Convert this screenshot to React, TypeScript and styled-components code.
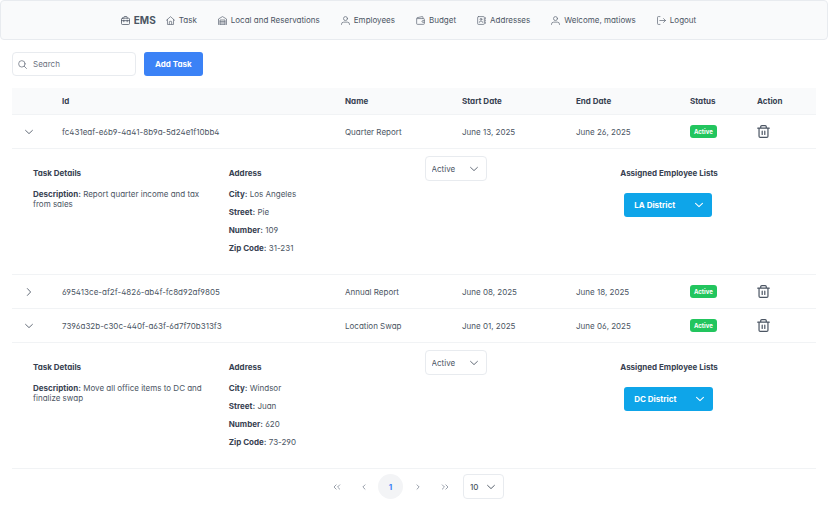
import React from "react";
import styled, { createGlobalStyle } from "styled-components";

const color = {
  text: "#4b5563",
  strong: "#374151",
  muted: "#6b7280",
  line: "#f1f3f5",
  border: "#e8ebef",
  surface: "#f9fafb",
  primary: "#3b82f6",
  info: "#0ea5e9",
  success: "#22c55e",
};

const GlobalStyle = createGlobalStyle`
  *, *::before, *::after { box-sizing: border-box; }
  body {
    margin: 0;
    background: #ffffff;
    color: ${color.text};
    font-family: Inter, "Liberation Sans", sans-serif;
    font-feature-settings: "cv02", "cv03", "cv04", "cv11";
    font-size: 8px;
    line-height: 12px;
  }
  button, input, select {
    font: inherit;
    font-feature-settings: inherit;
    color: inherit;
    margin: 0;
  }
  button { cursor: pointer; }
`;

/* ---------- icons ---------- */

const Svg = styled.svg<{ $size: number; $weight?: number }>`
  display: block;
  flex: none;
  width: ${(p) => p.$size}px;
  height: ${(p) => p.$size}px;
  fill: none;
  stroke: currentColor;
  stroke-width: ${(p) => p.$weight ?? 1.2};
  stroke-linecap: round;
  stroke-linejoin: round;
`;

const shapes = {
  briefcase: (
    <>
      <rect x="0.8" y="3.4" width="12.4" height="9.8" rx="1.4" />
      <path d="M4.4 3.4V2A1.2 1.2 0 0 1 5.6 0.8H8.4A1.2 1.2 0 0 1 9.6 2V3.4M0.8 7.2H13.2M4.4 6.4V9M9.6 6.4V9" />
    </>
  ),
  home: (
    <path d="M0.7 6.6L7 1L13.3 6.6M2.3 5.4V13.2H11.7V5.4M5.2 13V9.2A1 1 0 0 1 6.2 8.2H7.8A1 1 0 0 1 8.8 9.2V13" />
  ),
  warehouse: (
    <path d="M0.8 13.2V4.6L7 0.9L13.2 4.6V13.2M3.2 13.2V6.2H10.8V13.2M3.2 8.5H10.8M3.2 10.8H10.8M3.2 13.1H10.8" />
  ),
  user: (
    <>
      <circle cx="7" cy="4" r="3.1" />
      <path d="M0.8 13.2V12.6A3.2 3.2 0 0 1 4 9.6H10A3.2 3.2 0 0 1 13.2 12.6V13.2" />
    </>
  ),
  wallet: (
    <path d="M1 4.2V11.8A1.2 1.2 0 0 0 2.2 13H11.8A1.2 1.2 0 0 0 13 11.8V5.2A1.2 1.2 0 0 0 11.8 4H1.8A0.7 0.7 0 0 1 1.6 2.7L9.6 0.9A1 1 0 0 1 10.8 1.8V4M13 7.2H10.6A1.2 1.2 0 0 0 10.6 9.8H13" />
  ),
  addressBook: (
    <>
      <rect x="1" y="0.9" width="10.4" height="12.2" rx="1.2" />
      <circle cx="6.2" cy="5.1" r="1.4" />
      <path d="M3.6 9.8A2.6 2 0 0 1 8.8 9.8M13 2.6V4.2M13 6.2V7.8M13 9.8V11.4" />
    </>
  ),
  signOut: (
    <path d="M4.6 13.1H2A1.2 1.2 0 0 1 0.8 11.9V2.1A1.2 1.2 0 0 1 2 0.9H4.6M4.4 7H13.2M10.2 4L13.2 7L10.2 10" />
  ),
  search: (
    <>
      <circle cx="6" cy="6" r="5" />
      <path d="M9.7 9.7L13.2 13.2" />
    </>
  ),
  trash: (
    <path d="M0.8 3.4H13.2M2.2 3.4V12A1.3 1.3 0 0 0 3.5 13.3H10.5A1.3 1.3 0 0 0 11.8 12V3.4M4 3.4V1.9A1.2 1.2 0 0 1 5.2 0.7H8.8A1.2 1.2 0 0 1 10 1.9V3.4M5.6 6.6V10.2M8.4 6.6V10.2" />
  ),
  chevronDown: <path d="M1 4.2L7 9.8L13 4.2" />,
  chevronRight: <path d="M4.2 1L9.8 7L4.2 13" />,
  angleLeft: <path d="M8.4 4L5.4 7L8.4 10" />,
  angleRight: <path d="M5.6 4L8.6 7L5.6 10" />,
  anglesLeft: <path d="M5.8 4L2.8 7L5.8 10M10.8 4L7.8 7L10.8 10" />,
  anglesRight: <path d="M3.2 4L6.2 7L3.2 10M8.2 4L11.2 7L8.2 10" />,
};

type IconName = keyof typeof shapes;

function Icon({ name, size = 9, weight }: { name: IconName; size?: number; weight?: number }) {
  return (
    <Svg viewBox="0 0 14 14" $size={size} $weight={weight} aria-hidden="true">
      {shapes[name]}
    </Svg>
  );
}

/* ---------- navigation ---------- */

const NavBar = styled.nav`
  display: flex;
  justify-content: center;
  align-items: center;
  height: 40px;
  background: ${color.surface};
  border: 1px solid ${color.border};
  border-radius: 4px;
`;

const Brand = styled.a`
  display: flex;
  align-items: center;
  gap: 4px;
  font-size: 10px;
  font-weight: 700;
  color: ${color.text};
  text-decoration: none;
`;

const NavLink = styled.a`
  display: flex;
  align-items: center;
  gap: 4px;
  padding: 0 11px 0 10px;
  color: ${color.text};
  text-decoration: none;
  white-space: nowrap;
  & > svg {
    color: ${color.muted};
  }
`;

const navItems: { icon: IconName; label: string }[] = [
  { icon: "home", label: "Task" },
  { icon: "warehouse", label: "Local and Reservations" },
  { icon: "user", label: "Employees" },
  { icon: "wallet", label: "Budget" },
  { icon: "addressBook", label: "Addresses" },
  { icon: "user", label: "Welcome, matiows" },
  { icon: "signOut", label: "Logout" },
];

/* ---------- toolbar ---------- */

const Main = styled.main`
  padding: 12px;
`;

const Toolbar = styled.div`
  display: flex;
  gap: 8px;
  margin-bottom: 12px;
`;

const SearchField = styled.label`
  display: flex;
  align-items: center;
  gap: 6px;
  width: 124px;
  height: 24px;
  padding: 0 5px;
  border: 1px solid ${color.border};
  border-radius: 4px;
  color: ${color.muted};
`;

const SearchInput = styled.input`
  flex: 1;
  min-width: 0;
  padding: 0;
  border: 0;
  outline: 0;
  background: transparent;
  &::placeholder {
    color: ${color.muted};
    opacity: 1;
  }
`;

const SolidButton = styled.button<{ $tone: "primary" | "info" }>`
  display: inline-flex;
  align-items: center;
  gap: 20px;
  height: 24px;
  padding: 0 ${(p) => (p.$tone === "info" ? "9px 0 10px" : "11px")};
  border: 0;
  border-radius: 3px;
  background: ${(p) => color[p.$tone]};
  color: #ffffff;
  font-weight: 700;
`;

/* ---------- table ---------- */

const Table = styled.table`
  width: 100%;
  table-layout: fixed;
  border-collapse: separate;
  border-spacing: 0;
`;

const Col = styled.col<{ $width?: number }>`
  width: ${(p) => (p.$width ? `${p.$width}px` : "auto")};
`;

const HeadCell = styled.th`
  height: 27px;
  padding: 0 9px;
  background: ${color.surface};
  border-bottom: 1px solid ${color.line};
  color: ${color.strong};
  font-weight: 700;
  text-align: left;
`;

const Cell = styled.td`
  height: 34px;
  padding: 0 9px;
  border-bottom: 1px solid ${color.line};
`;

const IconButton = styled.button`
  display: flex;
  padding: 0;
  border: 0;
  background: transparent;
  color: ${color.text};
`;

const Toggle = styled(IconButton)`
  padding: 4px;
`;

const Tag = styled.span`
  display: inline-block;
  padding: 0 4px;
  border-radius: 3px;
  background: ${color.success};
  color: #ffffff;
  font-size: 6px;
  font-weight: 700;
  line-height: 13px;
  vertical-align: middle;
`;

const DetailCell = styled.td`
  height: 126px;
  padding: 0 0 0 21px;
  border-bottom: 1px solid ${color.line};
  vertical-align: top;
`;

const DetailGrid = styled.div`
  display: grid;
  grid-template-columns: repeat(4, minmax(0, 1fr));
`;

const DetailColumn = styled.section<{ $raised?: boolean }>`
  padding: ${(p) => (p.$raised ? 7 : 18)}px 16px 0 0;
`;

const DetailTitle = styled.h2`
  margin: 0 0 10px;
  color: ${color.strong};
  font-size: 8px;
  font-weight: 700;
`;

const Line = styled.p`
  margin: 0 0 8px;
  line-height: 10px;
`;

const Label = styled.strong`
  color: ${color.strong};
  font-weight: 700;
`;

const ListHolder = styled.div`
  padding: 4px 0 0 4px;
`;

const SelectBox = styled.span<{ $width: number }>`
  display: inline-grid;
  align-items: center;
  width: ${(p) => p.$width}px;
  height: 25px;
  vertical-align: top;
  & > * {
    grid-area: 1 / 1;
  }
  & > svg {
    justify-self: end;
    margin-right: 9px;
    pointer-events: none;
  }
`;

const NativeSelect = styled.select`
  width: 100%;
  height: 100%;
  padding: 0 6px;
  appearance: none;
  border: 1px solid ${color.border};
  border-radius: 4px;
  background: #ffffff;
`;

/* ---------- paginator ---------- */

const Paginator = styled.nav`
  display: flex;
  justify-content: center;
  align-items: center;
  gap: 2px;
  padding-top: 5px;
`;

const PageButton = styled.button<{ $current?: boolean }>`
  display: flex;
  align-items: center;
  justify-content: center;
  width: 25px;
  height: 25px;
  padding: 0;
  border: 0;
  border-radius: 50%;
  background: ${(p) => (p.$current ? "#f3f4f6" : "transparent")};
  color: ${(p) => (p.$current ? color.primary : "#9aa1ac")};
  font-weight: ${(p) => (p.$current ? 700 : 400)};
`;

const PageSize = styled.div`
  padding-left: 4px;
  font-weight: 500;
`;

/* ---------- data ---------- */

type Task = {
  id: string;
  name: string;
  start: string;
  end: string;
  open: boolean;
  description: string;
  address: [string, string][];
  list: string;
};

const tasks: Task[] = [
  {
    id: "fc431eaf-e6b9-4a41-8b9a-5d24e1f10bb4",
    name: "Quarter Report",
    start: "June 13, 2025",
    end: "June 26, 2025",
    open: true,
    description: "Report quarter income and tax from sales",
    address: [["City", "Los Angeles"], ["Street", "Pie"], ["Number", "109"], ["Zip Code", "31-231"]],
    list: "LA District",
  },
  {
    id: "695413ce-af2f-4826-ab4f-fc8d92af9805",
    name: "Annual Report",
    start: "June 08, 2025",
    end: "June 18, 2025",
    open: false,
    description: "",
    address: [],
    list: "",
  },
  {
    id: "7396a32b-c30c-440f-a63f-6d7f70b313f3",
    name: "Location Swap",
    start: "June 01, 2025",
    end: "June 06, 2025",
    open: true,
    description: "Move all office items to DC and finalize swap",
    address: [["City", "Windsor"], ["Street", "Juan"], ["Number", "620"], ["Zip Code", "73-290"]],
    list: "DC District",
  },
];

function TaskDetails({ task }: { task: Task }) {
  return (
    <tr>
      <DetailCell colSpan={7}>
        <DetailGrid>
          <DetailColumn>
            <DetailTitle>Task Details</DetailTitle>
            <Line>
              <Label>Description:</Label> {task.description}
            </Line>
          </DetailColumn>
          <DetailColumn>
            <DetailTitle>Address</DetailTitle>
            {task.address.map(([label, value]) => (
              <Line key={label}>
                <Label>{label}:</Label> {value}
              </Line>
            ))}
          </DetailColumn>
          <DetailColumn $raised>
            <SelectBox $width={62}>
              <NativeSelect aria-label={`Status of ${task.name}`} defaultValue="Active">
                <option>Active</option>
              </NativeSelect>
              <Icon name="chevronDown" size={8} weight={1.5} />
            </SelectBox>
          </DetailColumn>
          <DetailColumn>
            <DetailTitle>Assigned Employee Lists</DetailTitle>
            <ListHolder>
              <SolidButton type="button" $tone="info" aria-haspopup="true">
                {task.list}
                <Icon name="chevronDown" size={8} weight={1.8} />
              </SolidButton>
            </ListHolder>
          </DetailColumn>
        </DetailGrid>
      </DetailCell>
    </tr>
  );
}

function TaskRows({ task }: { task: Task }) {
  const [open, setOpen] = React.useState(task.open);
  return (
    <>
      <tr>
        <Cell>
          <Toggle
            type="button"
            aria-expanded={open}
            aria-label={`Details of ${task.name}`}
            onClick={() => setOpen(!open)}
          >
            <Icon name={open ? "chevronDown" : "chevronRight"} size={8} weight={1.5} />
          </Toggle>
        </Cell>
        <Cell>{task.id}</Cell>
        <Cell>{task.name}</Cell>
        <Cell>{task.start}</Cell>
        <Cell>{task.end}</Cell>
        <Cell>
          <Tag>Active</Tag>
        </Cell>
        <Cell>
          <IconButton type="button" aria-label={`Delete ${task.name}`}>
            <Icon name="trash" size={13} weight={1.3} />
          </IconButton>
        </Cell>
      </tr>
      {open && <TaskDetails task={task} />}
    </>
  );
}

export default function App() {
  return (
    <>
      <GlobalStyle />
      <NavBar aria-label="Main">
        <Brand href="#">
          <Icon name="briefcase" />
          EMS
        </Brand>
        {navItems.map((item) => (
          <NavLink href="#" key={item.label}>
            <Icon name={item.icon} />
            {item.label}
          </NavLink>
        ))}
      </NavBar>
      <Main>
        <Toolbar>
          <SearchField>
            <Icon name="search" />
            <SearchInput type="text" placeholder="Search" aria-label="Search" />
          </SearchField>
          <SolidButton type="button" $tone="primary">
            Add Task
          </SolidButton>
        </Toolbar>
        <Table>
          <colgroup>
            <Col $width={41} />
            <Col />
            <Col $width={117} />
            <Col $width={114} />
            <Col $width={114} />
            <Col $width={67} />
            <Col $width={68} />
          </colgroup>
          <thead>
            <tr>
              <HeadCell aria-label="Expand" />
              {["Id", "Name", "Start Date", "End Date", "Status", "Action"].map((title) => (
                <HeadCell key={title} scope="col">
                  {title}
                </HeadCell>
              ))}
            </tr>
          </thead>
          <tbody>
            {tasks.map((task) => (
              <TaskRows key={task.id} task={task} />
            ))}
          </tbody>
        </Table>
        <Paginator aria-label="Pages">
          <PageButton type="button" aria-label="First page">
            <Icon name="anglesLeft" size={10} weight={1.4} />
          </PageButton>
          <PageButton type="button" aria-label="Previous page">
            <Icon name="angleLeft" size={10} weight={1.4} />
          </PageButton>
          <PageButton type="button" $current aria-current="page">
            1
          </PageButton>
          <PageButton type="button" aria-label="Next page">
            <Icon name="angleRight" size={10} weight={1.4} />
          </PageButton>
          <PageButton type="button" aria-label="Last page">
            <Icon name="anglesRight" size={10} weight={1.4} />
          </PageButton>
          <PageSize>
            <SelectBox $width={41}>
              <NativeSelect aria-label="Rows per page" defaultValue="10">
                <option>10</option>
              </NativeSelect>
              <Icon name="chevronDown" size={8} weight={1.6} />
            </SelectBox>
          </PageSize>
        </Paginator>
      </Main>
    </>
  );
}
